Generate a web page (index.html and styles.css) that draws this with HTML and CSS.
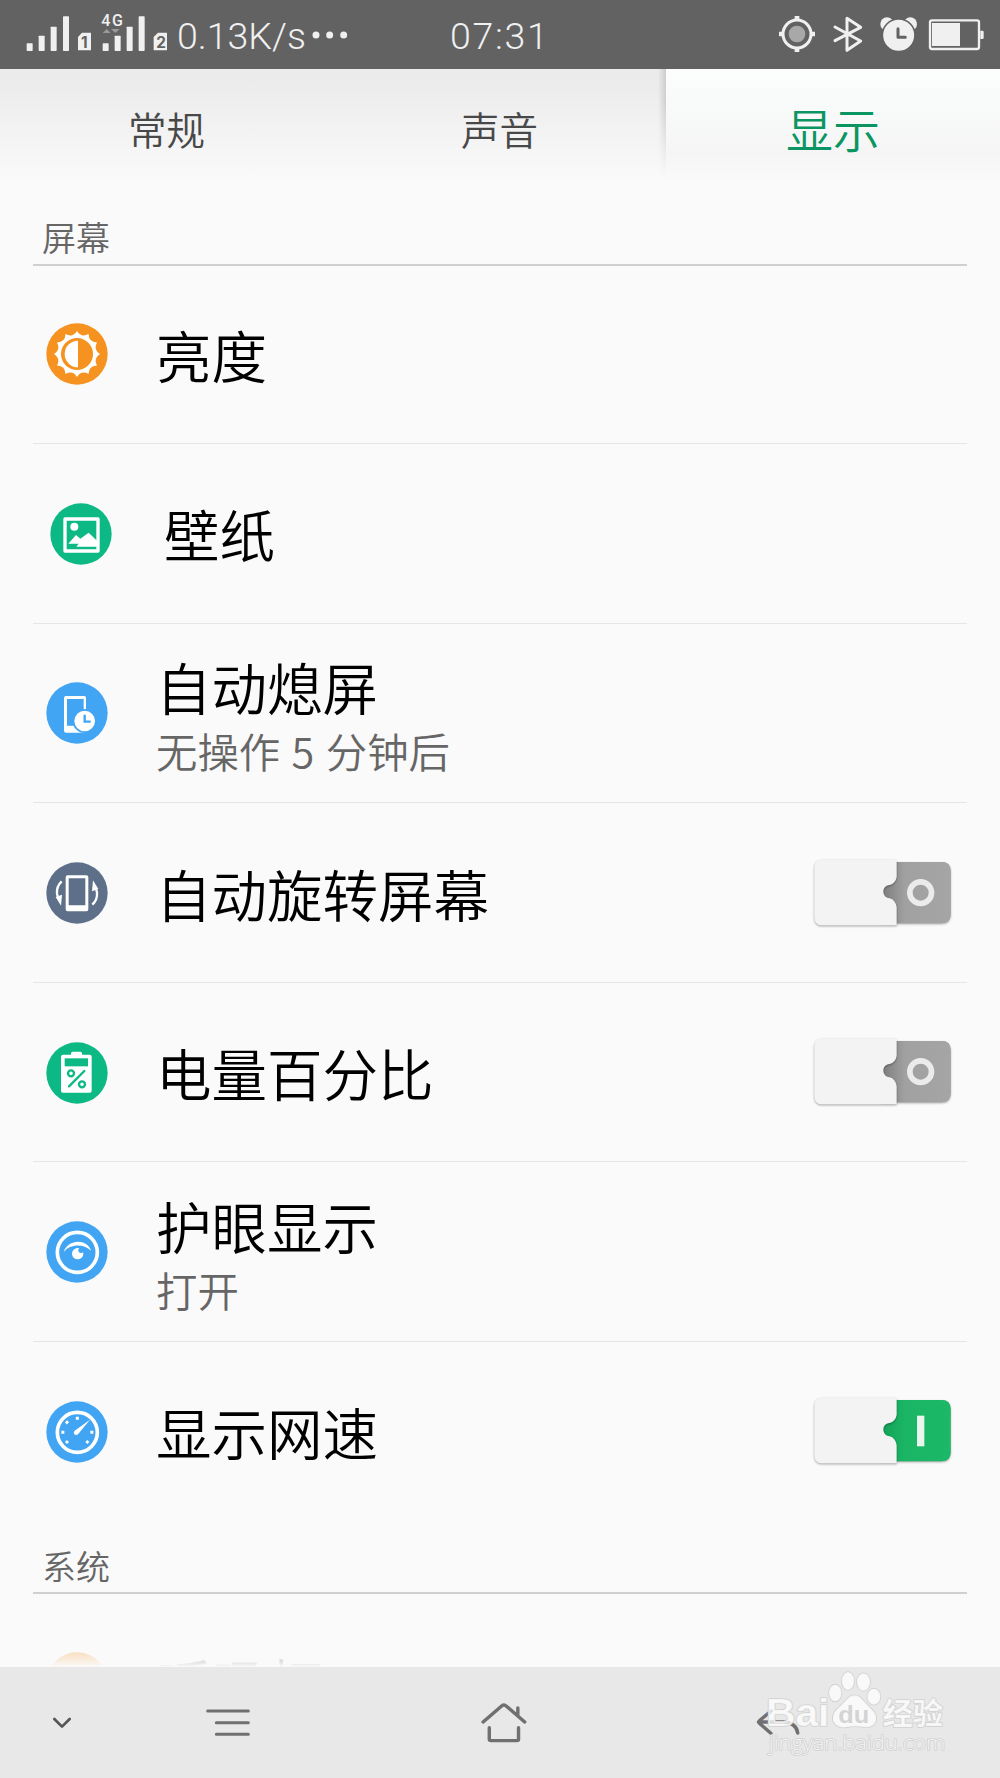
FILE: index.html
```html
<!DOCTYPE html>
<html lang="zh-CN">
<head>
<meta charset="utf-8">
<title>设置</title>
<link rel="stylesheet" href="styles.css">
</head>
<body>
<header class="status">
  <div class="status-left">
    <svg class="signals" viewBox="75 0 432 207">
      <g fill="#f0f0f0">
        <rect x="80" y="130" width="18" height="23" rx="2"/><rect x="116" y="107" width="18" height="46" rx="2"/><rect x="152" y="80" width="18" height="73" rx="2"/><rect x="189" y="49" width="18" height="104" rx="2"/>
        <path d="M246 98h27v53h-39v-40z"/>
        <rect x="308" y="130" width="18" height="23" rx="2"/><rect x="344" y="107" width="18" height="46" rx="2"/><rect x="380" y="80" width="18" height="73" rx="2"/><rect x="416" y="49" width="18" height="104" rx="2"/>
        <path d="M474 98h27v53h-40v-40z"/>
      </g>
      <path d="M308 99l12-12 12 12zM333 87h26l-13 12z" fill="#9a9a9a"/>
      <text x="304" y="78" class="net" textLength="65">4G</text>
      <text x="243" y="144" class="sim">1</text>
      <text x="469" y="144" class="sim">2</text>
    </svg>
    <span class="speed">0.13K/s</span>
    <svg class="dots" viewBox="0 0 108 24" fill="#f0f0f0"><circle cx="12" cy="12" r="10.5"/><circle cx="53" cy="12" r="10.5"/><circle cx="95" cy="12" r="10.5"/></svg>
  </div>
  <span class="clock">07:31</span>
  <svg class="status-right" viewBox="414 0 624 207">
    <g fill="none" stroke="#f0f0f0">
      <circle cx="471" cy="102" r="42" stroke-width="9"/>
      <path d="M471 48v10M471 146v10M417 102h10M515 102h10" stroke-width="14"/>
      <path d="M585 81L662 123 621 151V55L662 82 585 122" stroke-width="9" stroke-linecap="round" stroke-linejoin="round"/>
      <rect x="870" y="61" width="147" height="86" rx="6" stroke-width="7"/>
    </g>
    <circle cx="471" cy="102" r="25" fill="#a8a8a8"/>
    <g fill="#f0f0f0">
      <circle cx="741" cy="72" r="20"/><circle cx="811" cy="72" r="20"/>
      <circle cx="776" cy="106" r="49" stroke="#626262" stroke-width="5"/>
      <rect x="876" y="69" width="84" height="69"/><path d="M1021 92h6q4 0 4 4v17q0 4-4 4h-6z"/>
    </g>
    <path d="M774 86v26h22" fill="none" stroke="#626262" stroke-width="9" stroke-linecap="round" stroke-linejoin="round"/>
  </svg>
</header>

<nav class="tabs">
  <a class="tab">常规</a>
  <a class="tab">声音</a>
  <a class="tab tab-active">显示</a>
</nav>

<main class="content">
  <h2 class="section-title">屏幕</h2>
  <ul class="rows">
    <li class="row">
      <svg class="icon" viewBox="-93 -93 186 186">
        <circle r="92" fill="#f59220"/>
        <path fill="#fff" d="M69 0Q48.300 12.900 59.800 34.500Q35.400 35.400 34.500 59.800Q12.900 48.300 0 69Q-12.900 48.300-34.500 59.800Q-35.400 35.400-59.800 34.500Q-48.300 12.900-69 0Q-48.300-12.900-59.800-34.500Q-35.400-35.400-34.500-59.800Q-12.900-48.300 0-69Q12.900-48.300 34.500-59.800Q35.400-35.400 59.800-34.500Q48.300-12.900 69 0z"/>
        <circle r="48" fill="#f59220"/><path d="M3-40A40 40 0 0 0 3 40z" fill="#fff"/>
      </svg>
      <div class="label"><span class="name">亮度</span></div>
    </li>
    <li class="row row-inset">
      <svg class="icon" viewBox="-93 -93 186 186">
        <circle r="92" fill="#0cb985"/>
        <rect x="-48" y="-45" width="99" height="96" fill="none" stroke="#fff" stroke-width="10" stroke-linejoin="round"/>
        <circle cx="-20" cy="-22" r="12" fill="#fff"/>
        <path d="M-38 29L-15 3-2 14 23-4 48 20V38H-14L-7 29z" fill="#fff"/>
      </svg>
      <div class="label"><span class="name">壁纸</span></div>
    </li>
    <li class="row">
      <svg class="icon" viewBox="-93 -93 186 186">
        <circle r="92" fill="#41a5f4"/>
        <path fill="#fff" fill-rule="evenodd" d="M-33-51H22q5 0 5 5V59H-33q-6 0-6-6V-45q0-6 6-6zM-30-42V38H20V-42z"/>
        <circle cx="23" cy="24" r="33.500" fill="#fff" stroke="#41a5f4" stroke-width="5"/>
        <path d="M23 5V26H41" fill="none" stroke="#41a5f4" stroke-width="7"/>
      </svg>
      <div class="label label-two"><span class="name">自动熄屏</span><span class="hint">无操作 5 分钟后</span></div>
    </li>
    <li class="row">
      <svg class="icon" viewBox="-93 -93 186 186">
        <circle r="92" fill="#5e7089"/>
        <path fill="#fff" fill-rule="evenodd" d="M-28-53H28q6 0 6 6V49q0 6-6 6H-28q-6 0-6-6V-47q0-6 6-6zM-25-44V37H25V-44z"/>
        <g id="turn" fill="#fff"><path d="M-46-35Q-62-20-60 2Q-58 14-53 20" fill="none" stroke="#fff" stroke-width="7"/><path d="M-64 12L-45 5-48 38z"/></g>
        <use href="#turn" transform="rotate(180)"/>
      </svg>
      <div class="label"><span class="name">自动旋转屏幕</span></div>
      <svg class="switch" viewBox="0 0 420 204">
        <path d="M206 9h180q27 0 27 27v130q0 27-27 27H206z" class="knob-shadow"/>
        <path d="M206 9h180q27 0 27 27v130q0 27-27 27H206z" fill="url(#off)"/>
        <path d="M28 2H248l3 3V54Q247 74 230 78C204 80 206 116 230 118Q247 122 251 145V199H28Q4 199 4 173V26Q4 2 28 2z" class="slot"/>
        <circle cx="323" cy="101" r="32.500" fill="none" stroke="#ebebeb" stroke-width="17"/>
        <defs><linearGradient id="off"><stop offset="0" stop-color="#7c7c7c"/><stop offset=".34" stop-color="#a1a1a1"/><stop offset="1" stop-color="#a5a5a5"/></linearGradient></defs>
      </svg>
    </li>
    <li class="row">
      <svg class="icon" viewBox="-93 -93 186 186">
        <circle r="92" fill="#0cb985"/>
        <path d="M-41-55h23v-4q0-5 5-5H10q5 0 5 5v4H38q6 0 6 6V53q0 6-6 6H-42q-6 0-6-6V-49q0-6 7-6z" fill="#fff"/>
        <path d="M-37-44H33v24H-37z" fill="#0cb985"/>
        <g fill="none" stroke="#0cb985" stroke-width="7"><circle cx="-18" cy="1" r="9"/><circle cx="15" cy="34" r="9"/><path d="M-24 40L22-6" stroke-linecap="round"/></g>
      </svg>
      <div class="label"><span class="name">电量百分比</span></div>
      <svg class="switch" viewBox="0 0 420 204">
        <path d="M206 9h180q27 0 27 27v130q0 27-27 27H206z" class="knob-shadow"/>
        <path d="M206 9h180q27 0 27 27v130q0 27-27 27H206z" fill="url(#off)"/>
        <path d="M28 2H248l3 3V54Q247 74 230 78C204 80 206 116 230 118Q247 122 251 145V199H28Q4 199 4 173V26Q4 2 28 2z" class="slot"/>
        <circle cx="323" cy="101" r="32.500" fill="none" stroke="#ebebeb" stroke-width="17"/>
      </svg>
    </li>
    <li class="row">
      <svg class="icon" viewBox="-93 -93 186 186">
        <circle r="92" fill="#41a5f4"/>
        <circle cx="1" cy="1" r="60" fill="none" stroke="#fff" stroke-width="11"/>
        <path d="M-40 0C-27-40 31-40 42-4C20-25-20-25-40 0z" fill="#fff"/>
        <circle cx="2" cy="5" r="17" fill="#fff"/><circle cx="12" cy="-5" r="8" fill="#41a5f4"/>
      </svg>
      <div class="label label-two"><span class="name">护眼显示</span><span class="hint">打开</span></div>
    </li>
    <li class="row row-last">
      <svg class="icon" viewBox="-93 -93 186 186">
        <circle r="92" fill="#41a5f4"/>
        <circle cx="1" cy="1" r="60" fill="none" stroke="#fff" stroke-width="11"/>
        <path d="M39-37L3 7Q-3 11-8 7Q-12 1-7-4z" fill="#fff"/>
        <path d="M1-46v9M-33-32l6 6M-47 1h9M-33 33l6-6M34 33l-6-6M49 1h-9" stroke="#fff" stroke-width="9"/>
      </svg>
      <div class="label"><span class="name">显示网速</span></div>
      <svg class="switch" viewBox="0 0 420 204">
        <path d="M206 9h180q27 0 27 27v130q0 27-27 27H206z" class="knob-shadow"/>
        <path d="M206 9h180q27 0 27 27v130q0 27-27 27H206z" fill="url(#on)"/>
        <path d="M28 2H248l3 3V54Q247 74 230 78C204 80 206 116 230 118Q247 122 251 145V199H28Q4 199 4 173V26Q4 2 28 2z" class="slot"/>
        <rect x="312" y="56" width="22" height="92" fill="#e8f6ee"/>
        <defs><linearGradient id="on"><stop offset="0" stop-color="#14a257"/><stop offset=".34" stop-color="#1ab565"/><stop offset="1" stop-color="#1bb867"/></linearGradient></defs>
      </svg>
    </li>
  </ul>
  <h2 class="section-title">系统</h2>
  <ul class="rows">
    <li class="row row-last">
      <svg class="icon" viewBox="-93 -93 186 186"><circle r="92" fill="#f59220"/><circle r="48" fill="none" stroke="#fff" stroke-width="10"/></svg>
      <div class="label"><span class="name">呼吸灯</span></div>
    </li>
  </ul>
</main>

<footer class="navbar">
  <svg class="nav-hide" viewBox="0 0 60 36"><path d="M7 6L30 29 53 6" stroke-width="8"/></svg>
  <svg class="nav-menu" viewBox="0 0 138 90"><path d="M8 9H130M34 44H130M34 79H130" stroke-width="9"/></svg>
  <svg class="nav-home" viewBox="57 184 141 126" preserveAspectRatio="none"><path d="M66 244L120 196Q127 190 133 196L187 244M167 202V225M84 261V295Q84 300 89 300H164Q169 300 169 295V261" stroke-width="10"/></svg>
  <svg class="nav-back" viewBox="858 204 135 87" preserveAspectRatio="none"><path d="M905 213L873 240Q866 246 873 252L904 280M868 246H940Q978 248 982 279" stroke-width="10"/></svg>
  <svg class="watermark" viewBox="885 84 540 270" preserveAspectRatio="none">
    <g class="mark">
      <ellipse cx="1089" cy="159" rx="18" ry="25"/><ellipse cx="1126" cy="123" rx="18" ry="27"/><ellipse cx="1171" cy="126" rx="19" ry="26"/><ellipse cx="1201" cy="170" rx="19" ry="24"/>
      <path d="M1145 166Q1160 166 1172 183L1201 215Q1213 233 1204 250Q1193 265 1170 261Q1145 256 1120 262Q1096 264 1086 249Q1076 232 1090 212L1118 183Q1130 166 1145 166z"/>
      <text x="888" y="259" font-size="118" textLength="184" lengthAdjust="spacingAndGlyphs" class="bold">Bai</text>
      <text x="1226" y="252" font-size="90" textLength="176" lengthAdjust="spacingAndGlyphs" class="bold">经验</text>
      <text x="896" y="331" font-size="62" textLength="512" lengthAdjust="spacingAndGlyphs">jingyan.baidu.com</text>
    </g>
    <text x="1098" y="248" font-size="74" textLength="90" lengthAdjust="spacingAndGlyphs" class="du">du</text>
  </svg>
</footer>
</body>
</html>
```
FILE: styles.css
```css
* { box-sizing: border-box; }

body {
  margin: 0;
  width: 1000px;
  height: 1778px;
  overflow: hidden;
  display: flex;
  flex-direction: column;
  background: #fafafa;
  font-family: "Noto Sans CJK SC", sans-serif;
  font-weight: 350;
}

svg { display: block; flex: none; }

/* status bar */
.status {
  flex: none;
  height: 69px;
  padding: 0 14px 0 25px;
  display: grid;
  grid-template-columns: 400px 1fr 208px;
  grid-template-rows: 69px;
  align-items: center;
  background: #626262;
  color: #f0f0f0;
  font: 300 37.5px/40px Roboto, sans-serif;
}
.status-left { display: flex; align-items: center; height: 69px; }
.signals { width: 144px; height: 69px; }
.net { font: 500 48px Roboto, sans-serif; fill: #f0f0f0; }
.sim { font: bold 46px Inter, sans-serif; fill: #626262; }
.speed { margin-left: 8px; padding-top: 2px; width: 128px; }
.dots { width: 36px; height: 8px; margin-left: 7px; }
.clock { padding: 3px 0 0 25px; letter-spacing: 1.700px; }
.status-right { width: 208px; height: 69px; }

/* tabs */
.tabs {
  flex: none;
  height: 124px;
  display: grid;
  grid-template-columns: 333px 333px 334px;
  background: linear-gradient(#ebebeb 10px, #fafafa 112px);
}
.tab {
  display: flex;
  justify-content: center;
  height: 124px;
  font-size: 38.5px;
  line-height: 118px;
  color: #484848;
}
.tab-active {
  position: relative;
  font-size: 47px;
  line-height: 117px;
  color: #0b9562;
  background: linear-gradient(#fbfefd, #f5f5f5 84px, #fafafa 114px);
}
.tab-active::before {
  content: "";
  position: absolute;
  right: 100%;
  top: 0;
  width: 8px;
  height: 110px;
  background: linear-gradient(to left, rgba(0, 0, 0, .13), transparent);
  mask-image: linear-gradient(#000 30%, transparent);
}

/* settings list */
.content { flex: 1; min-height: 0; overflow: hidden; padding: 0 33px; position: relative; }
.content::after {
  content: "";
  position: absolute;
  left: 0;
  right: 0;
  bottom: 0;
  height: 36px;
  background: linear-gradient(rgba(250, 250, 250, .35), #fafafa);
}
.section-title {
  margin: 0;
  height: 72.5px;
  padding-left: 9px;
  border-bottom: 2px solid #d0d0d0;
  font-size: 34px;
  font-weight: 350;
  line-height: 88px;
  color: #666;
}
.rows { list-style: none; margin: -1px 0 0; padding: 0; }
.row {
  height: 179.6px;
  padding: 0 14px 0 13px;
  display: flex;
  align-items: center;
  border-bottom: 1px solid #e6e6e6;
}
.row-last { border-bottom-color: transparent; }
.icon { width: 62px; height: 62px; margin: 1px 48px 0 0; }
.row-inset { padding-left: 16.5px; }
.row-inset .icon { margin-right: 52.5px; }
.label { flex: 1; display: flex; flex-direction: column; }
.label-two { padding-top: 6px; }
.name { font-size: 55.500px; line-height: 68px; color: #000; }
.hint { font-size: 41.400px; line-height: 60px; word-spacing: 2.200px; color: #666; }
.switch { width: 140px; height: 68px; overflow: visible; }
.knob-shadow { fill: #a0a0a0; filter: drop-shadow(0 3px 3px rgba(0, 0, 0, .3)); }
.slot { fill: #f3f3f3; filter: drop-shadow(0 3px 3px rgba(0, 0, 0, .35)); }

/* navigation bar */
.navbar {
  flex: none;
  position: relative;
  height: 111px;
  padding-left: 52px;
  display: flex;
  align-items: center;
  background: #e8e8e8;
  fill: none;
  stroke: #707070;
  stroke-linecap: round;
  stroke-linejoin: round;
}
.nav-hide { width: 20px; height: 12px; stroke: #555; }
.nav-menu { width: 46px; height: 30px; margin-left: 133px; }
.nav-home { width: 48.5px; height: 42px; margin-left: 228.5px; }
.nav-back { width: 46.5px; height: 29px; margin-left: 227px; }
.watermark { position: absolute; left: 765px; top: 1px; width: 186px; height: 90px; }
.mark { fill: #fff; fill-opacity: .75; stroke: #d2d2d2; stroke-width: 5; paint-order: stroke; font-family: "Open Sans", "Noto Sans CJK SC", sans-serif; }
.bold { font-weight: 700; font-family: "Liberation Sans", "Noto Sans CJK SC", sans-serif; }
.du { font: 700 74px "Liberation Sans", sans-serif; fill: #d4d4d4; stroke: none; }
```
